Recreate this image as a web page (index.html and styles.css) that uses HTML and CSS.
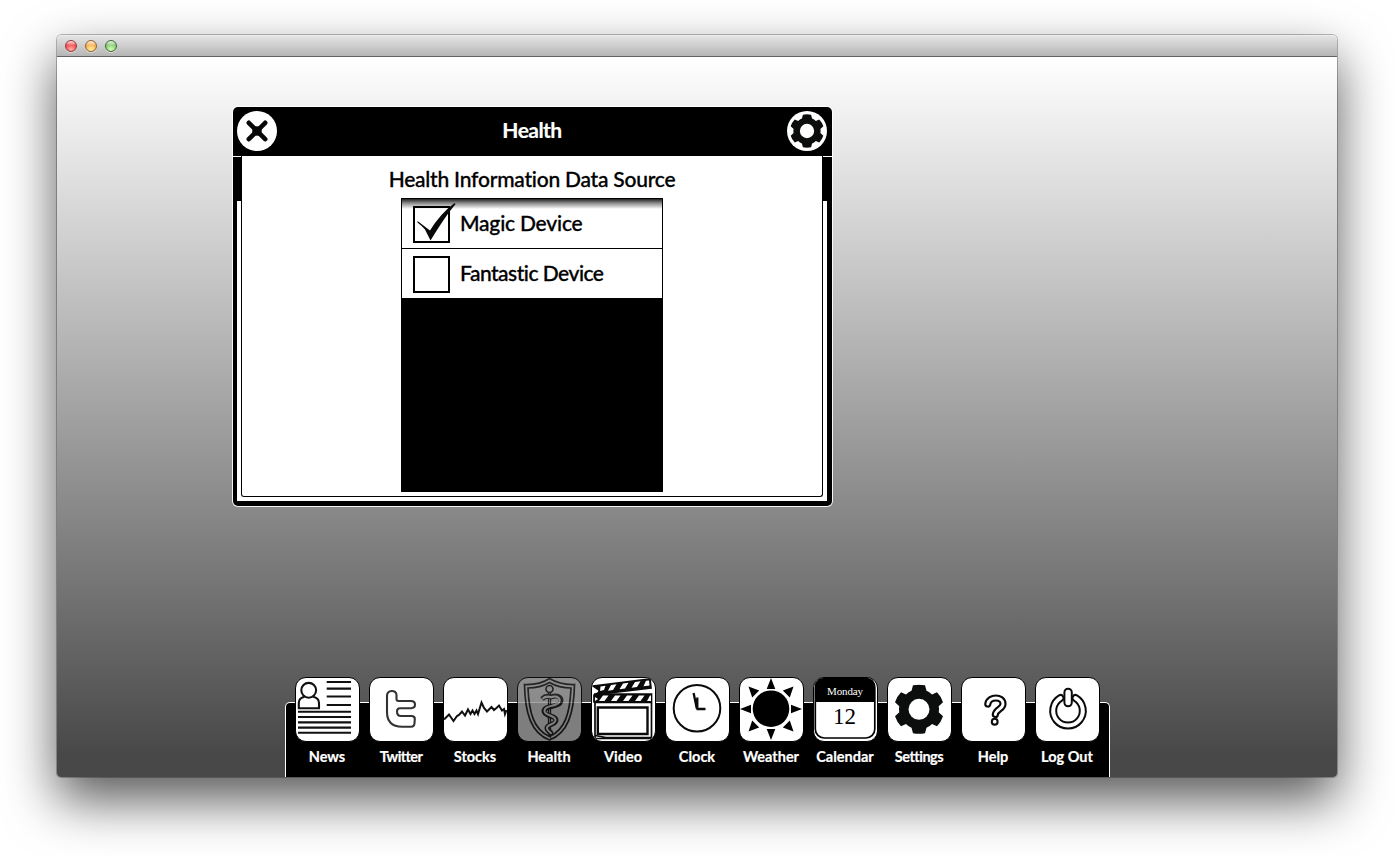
FILE: index.html
```html
<!DOCTYPE html>
<html lang="en">
<head>
<meta charset="utf-8">
<title>Health</title>
<link rel="stylesheet" href="styles.css">
</head>
<body>
<svg class="defs" width="0" height="0">
  <symbol id="gear" viewBox="-25 -25 50 50">
    <path fill-rule="evenodd" d="M-6 -24Q0 -25 6 -24L7.5 -18.5Q10.5 -17.5 13 -14.8L18 -17Q22 -13 24 -7L19.7 -3Q20.5 0 19.7 3L24 7Q22 13 18 17L13 14.8Q10.5 17.5 7.5 18.5L6 24Q0 25 -6 24L-7.5 18.5Q-10.5 17.5 -13 14.8L-18 17Q-22 13 -24 7L-19.7 3Q-20.5 0 -19.7 -3L-24 -7Q-22 -13 -18 -17L-13 -14.8Q-10.5 -17.5 -7.5 -18.5ZM10.5 0A10.5 10.5 0 1 0 -10.5 0A10.5 10.5 0 1 0 10.5 0Z"/>
  </symbol>
</svg>
<div class="window">
  <div class="titlebar">
    <span class="light red"></span><span class="light amber"></span><span class="light green"></span>
  </div>
  <main class="desktop">
    <section class="dialog">
      <header class="dialog-head">
        <svg class="round" viewBox="0 0 40 40"><circle cx="20" cy="20" r="20" fill="#fff"/><path d="M11.8 11.8L28.2 28.2M28.2 11.8L11.8 28.2" stroke="#080808" stroke-width="4.600" stroke-linecap="round"/><circle cx="20" cy="20" r="4.800" fill="#080808"/></svg>
        <h1>Health</h1>
        <svg class="round" viewBox="0 0 40 40"><circle cx="20" cy="20" r="20" fill="#fff"/><use href="#gear" x="3" y="3" width="34" height="34" fill="#0c0e0e"/></svg>
      </header>
      <div class="dialog-body">
        <div class="panel">
          <h2>Health Information Data Source</h2>
          <div class="list">
            <div class="row"><svg class="box" viewBox="0 0 44 42"><rect x="1" y="5" width="35" height="35" fill="none" stroke="#000" stroke-width="2"/><path d="M4.500 19L17 28.500Q27 12 41.500 1L42.500 2.200Q33 13 17.500 38.500L12 27.500Q9 24 4.500 20.500Z" fill="#080808"/></svg><span class="magic">Magic Device</span></div>
            <div class="row"><svg class="box" viewBox="0 0 44 42"><rect x="1" y="5" width="35" height="35" fill="none" stroke="#000" stroke-width="2"/></svg><span class="fantastic">Fantastic Device</span></div>
          </div>
        </div>
      </div>
    </section>

    <nav class="dock">
      <div class="app"><div class="tile"><svg viewBox="0 0 64 64" fill="none" stroke="#111" stroke-width="2.100"><circle cx="13.700" cy="13.300" r="7.400"/><path d="M9.500 19.800Q3.800 21 3.800 26V31.300H24V26Q24 21 18 19.800"/><path d="M31.700 5H56M31.700 11.600H56M31.700 19.500H56M31.700 28H56M3 34.700H56M3 40H56M3 45.400H56M3 50.600H56M3 55.700H56"/></svg></div><span>News</span></div>
      <div class="app"><div class="tile"><svg viewBox="0 0 64 64" fill="none" stroke="#333" stroke-width="2.100"><path d="M18 19C18 12.500 27.500 12.500 27.500 18V22Q27.500 24 29.500 24H42Q46 24 46 27.600Q46 31.200 42 31.200H31Q28 31.200 28 34.500Q28 39 32 39H43Q46 39.500 45.800 42L45.500 46Q45.500 49.700 42 49.700H33Q18 49.500 18 35Z"/></svg></div><span class="tight">Twitter</span></div>
      <div class="app"><div class="tile"><svg viewBox="0 0 64 64" fill="none" stroke="#111" stroke-width="2"><path d="M1 42.500L6 37.500L10.500 44L14 39L16 38L19 34.500L22 38.500L25 32.500L27.500 37L29.500 33.500L31.500 37L33.500 33.500L35 37L38.500 25.500L41 31L44 34.500L48.500 30L51 33L54 30.500L56 28.500L59 33.500L61 32L62 37L63.500 33"/></svg></div><span>Stocks</span></div>
      <div class="app"><div class="tile dim"><svg viewBox="0 0 64 64" fill="none" stroke="#1c1c1c" stroke-width="1.700"><path d="M32.500 1.500Q23 8 7.500 7.500C8 36 14 56 32.500 63C51 56 57 36 57.500 7.500Q43 8 32.500 1.500ZM32.500 5.500Q23 11 11 11C12 36 17 53 32.500 59.500C48 53 53 36 54 11Q42 11 32.500 5.500Z"/><circle cx="32.500" cy="12" r="3.500"/><path d="M31.500 15.500V57L33.500 60V15.500" stroke-width="1.300"/><path d="M25 22Q29 18 34 20C42 17 46 22 43 26C39 31 28 28 27 34C27 40 39 38 39 43C39 48 30 47 30 51C30 55 35 54 34 58" stroke-width="5"/><path d="M25.500 21.800Q29 18.500 34 20.200C41 18 44 22 42 25.500C38 30 27 28 27.500 34C28 39 38.500 38 38.500 43C38 48 30 47 30 51C30 55 34 54 34 57" stroke="#979797" stroke-width="2"/></svg></div><span>Health</span></div>
      <div class="app"><div class="tile"><svg viewBox="0 0 64 64" fill="none" stroke="#0a0a0a" stroke-width="1.700"><path fill="#0a0a0a" d="M2 9L59 2L60 11L10 17L10 25H3V18Q9 16 8 13Z"/><path fill="#fff" stroke="none" d="M9.500 9.500L14.500 8.800L13 13L9 14ZM20 8L25.500 7.300L22 13L17 13.800ZM32 6.500L37.500 5.800L34 11.500L28.500 12.300ZM44 5L49.500 4.300L46 10L40.500 10.800ZM55 3.800L58 3.500L58.500 8.500L52.500 9.300Z"/><path fill="#0a0a0a" d="M4 17H60.500V25.500H4Z"/><path fill="#fff" stroke="none" d="M12 18.500H17.500L13.500 24H8ZM24 18.500H29.500L25.500 24H20ZM36 18.500H41.500L37.500 24H32ZM48 18.500H53.500L49.500 24H44ZM59 18.500H60V24H56ZM4 20L7 22L4 24Z"/><path d="M4 26V61.500H60.500V26M4 58.500L15 60.500H60.500"/><path d="M6.800 30.500H56.500V57H6.800Z" stroke-width="2.400"/></svg></div><span>Video</span></div>
      <div class="app"><div class="tile"><svg viewBox="0 0 64 64" fill="none" stroke="#0a0a0a" stroke-width="2"><circle cx="32" cy="31.300" r="23.300"/><path d="M28.600 16L31.800 31.500M32.300 20.500V32.300M31.500 32H40.500" stroke-width="2.300"/></svg></div><span>Clock</span></div>
      <div class="app"><div class="tile"><svg viewBox="0 0 64 64"><circle cx="32" cy="31.700" r="18.300"/><path d="M32 1L36.300 12H27.700ZM32 63L27.700 52H36.300ZM1 32L12 27.700V36.300ZM63 32L52 36.300V27.700ZM54.500 9.500L50.800 20.600L43.800 13.600ZM9.500 9.500L20.200 13.600L13.200 20.600ZM54.500 54.500L43.800 50.500L50.800 43.500ZM9.500 54.500L13.200 43.500L20.200 50.500Z"/></svg></div><span>Weather</span></div>
      <div class="app"><div class="tile"><svg viewBox="0 0 64 64"><rect x="2.300" y="1.500" width="59.500" height="59.500" rx="9" fill="#fff" stroke="#000" stroke-width="1.700"/><path d="M2 25V10Q2 1 11 1H53Q62 1 62 10V25Z"/><text x="32" y="18" text-anchor="middle" class="day" textLength="36" lengthAdjust="spacing">Monday</text><text x="31.500" y="47" text-anchor="middle" class="date">12</text></svg></div><span>Calendar</span></div>
      <div class="app"><div class="tile"><svg viewBox="0 0 64 64"><use href="#gear" x="7" y="7.300" width="50" height="50" fill="#0c0e0e"/></svg></div><span class="snug">Settings</span></div>
      <div class="app"><div class="tile"><svg viewBox="0 0 64 64" fill="none" stroke-linecap="round" stroke-linejoin="round"><path d="M26.800 27C28 19 42 19 42 27C42 32 35 32 34.300 37.500" stroke="#0a0a0a" stroke-width="7.200"/><path d="M26.800 27C28 19 42 19 42 27C42 32 35 32 34.300 37.500" stroke="#fff" stroke-width="2.900"/><circle cx="33.700" cy="44.700" r="2.900" fill="#fff" stroke="#0a0a0a" stroke-width="2.100"/></svg></div><span>Help</span></div>
      <div class="app"><div class="tile"><svg viewBox="0 0 64 64" fill="none" stroke-linecap="round"><path d="M25.500 21A14.800 14.800 0 1 0 40.500 21" stroke="#0a0a0a" stroke-width="8"/><path d="M25.500 21A14.800 14.800 0 1 0 40.500 21" stroke="#fff" stroke-width="4"/><rect x="29.400" y="11.700" width="7.400" height="17.600" rx="3.700" fill="#fff" stroke="#0a0a0a" stroke-width="2"/></svg></div><span>Log Out</span></div>
    </nav>
  </main>
</div>
</body>
</html>
```
FILE: styles.css
```css
* { box-sizing: border-box; }
body {
  margin: 0;
  padding: 35px 57px 0;
  height: 856px;
  overflow: hidden;
  background: #fff;
  font-family: Lato, "Open Sans", sans-serif;
  font-variant-ligatures: none;
  color: #000;
}
.defs { display: block; }
.window {
  width: 1280px;
  height: 742px;
  border-radius: 5px 5px 4px 4px;
  box-shadow: 0 0 0 1px rgba(0,0,0,.26), 0 23px 52px rgba(0,0,0,.66);
}
.titlebar {
  display: flex;
  align-items: center;
  gap: 8px;
  height: 22px;
  padding-left: 8px;
  border-bottom: 1px solid #626262;
  border-radius: 5px 5px 0 0;
  background: linear-gradient(#e6e6e6, #b5b5b5);
  box-shadow: inset 0 1px #ececec;
}
.light {
  width: 12px;
  height: 12px;
  border-radius: 50%;
  border: 1px solid;
  box-shadow: 0 1px rgba(255,255,255,.5);
}
.red { border-color: #963a3c; background: linear-gradient(rgba(255,255,255,.75) 10%, transparent 45%), radial-gradient(circle at 50% 85%, #ffb0a8, #f0484c 60%, #c83238); }
.amber { border-color: #966030; background: linear-gradient(rgba(255,255,255,.75) 10%, transparent 45%), radial-gradient(circle at 50% 85%, #fff0a0, #f4ae50 60%, #c88030); }
.green { border-color: #3f6a38; background: linear-gradient(rgba(255,255,255,.75) 10%, transparent 45%), radial-gradient(circle at 50% 85%, #d8ffb8, #82c870 60%, #4a9040); }
.desktop {
  display: flex;
  flex-direction: column;
  height: 720px;
  padding-top: 50px;
  border-radius: 0 0 4px 4px;
  overflow: hidden;
  background: linear-gradient(#fff, #484848 97%);
}
.dialog {
  width: 599px;
  height: 399px;
  margin-left: 176px;
  border-radius: 5px;
  background: #000;
  box-shadow: 0 0 0 1px rgba(255,255,255,.9);
}
.dialog-head {
  display: flex;
  align-items: center;
  justify-content: space-between;
  height: 49px;
  padding: 0 5px 1px 4px;
  color: #fff;
}
.round { width: 40px; height: 40px; }
h1 {
  margin: -2px 0 0;
  font-size: 21px;
  line-height: 26px;
  font-weight: 700;
  letter-spacing: -.55px;
  -webkit-text-stroke: .2px;
}
.dialog-body {
  display: flex;
  justify-content: center;
  height: 345px;
  padding-right: 1px;
  border-top: 1px solid #fff;
  background: linear-gradient(#fff, #fff) 4px 44px / 590px 300px no-repeat;
}
.panel {
  display: flex;
  flex-direction: column;
  align-items: center;
  width: 582px;
  height: 341px;
  margin-top: -1px;
  border: 1px solid #000;
  border-top: 0;
  border-radius: 0 0 3px 3px;
  background: #fff;
}
h2 {
  margin: 10px 0 6px;
  font-size: 21px;
  line-height: 26px;
  font-weight: 500;
  letter-spacing: -.22px;
  white-space: nowrap;
  -webkit-text-stroke: .3px;
}
.list { width: 262px; height: 294px; border: 1px solid #000; border-bottom: 0; background: #000; }
.row {
  display: flex;
  align-items: center;
  height: 49px;
  margin-bottom: 1px;
  padding-left: 11px;
  background: #fff;
  font-size: 21px;
  font-weight: 500;
}
.row:first-child { background: linear-gradient(#222, #888 4px, #fff 10px); }
.box { width: 44px; height: 42px; margin-top: -1px; }
.row span { margin: -2px 0 0 3px; white-space: nowrap; -webkit-text-stroke: .3px; }
.magic { letter-spacing: -.2px; }
.fantastic { letter-spacing: -.5px; }
.dock {
  display: flex;
  gap: 10px;
  width: 825px;
  height: 75px;
  margin: auto 0 0 228px;
  padding: 0 9px;
  border: 1px solid #fff;
  border-bottom: 0;
  border-radius: 5px 5px 0 0;
  background: #000;
}
.app {
  display: flex;
  flex-direction: column;
  align-items: center;
  width: 64px;
  margin-top: -26px;
  color: #fff;
  font-size: 14.5px;
  line-height: 20px;
  font-weight: 700;
  white-space: nowrap;
  -webkit-text-stroke: .2px;
}
.tight { letter-spacing: -.6px; }
.snug { letter-spacing: -.5px; }
.tile {
  flex: none;
  width: 65px;
  height: 65px;
  margin-bottom: 5px;
  border: 1px solid #000;
  border-radius: 11px;
  background: #fff;
  overflow: hidden;
}
.tile svg { display: block; width: 64px; height: 64px; margin: -1px; }
.dim { background: #979797; opacity: .84; }
.day { font: 11px "Liberation Serif", serif; fill: #fff; -webkit-text-stroke: 0; }
.date { font: 23px "Liberation Serif", serif; -webkit-text-stroke: 0; }
```
